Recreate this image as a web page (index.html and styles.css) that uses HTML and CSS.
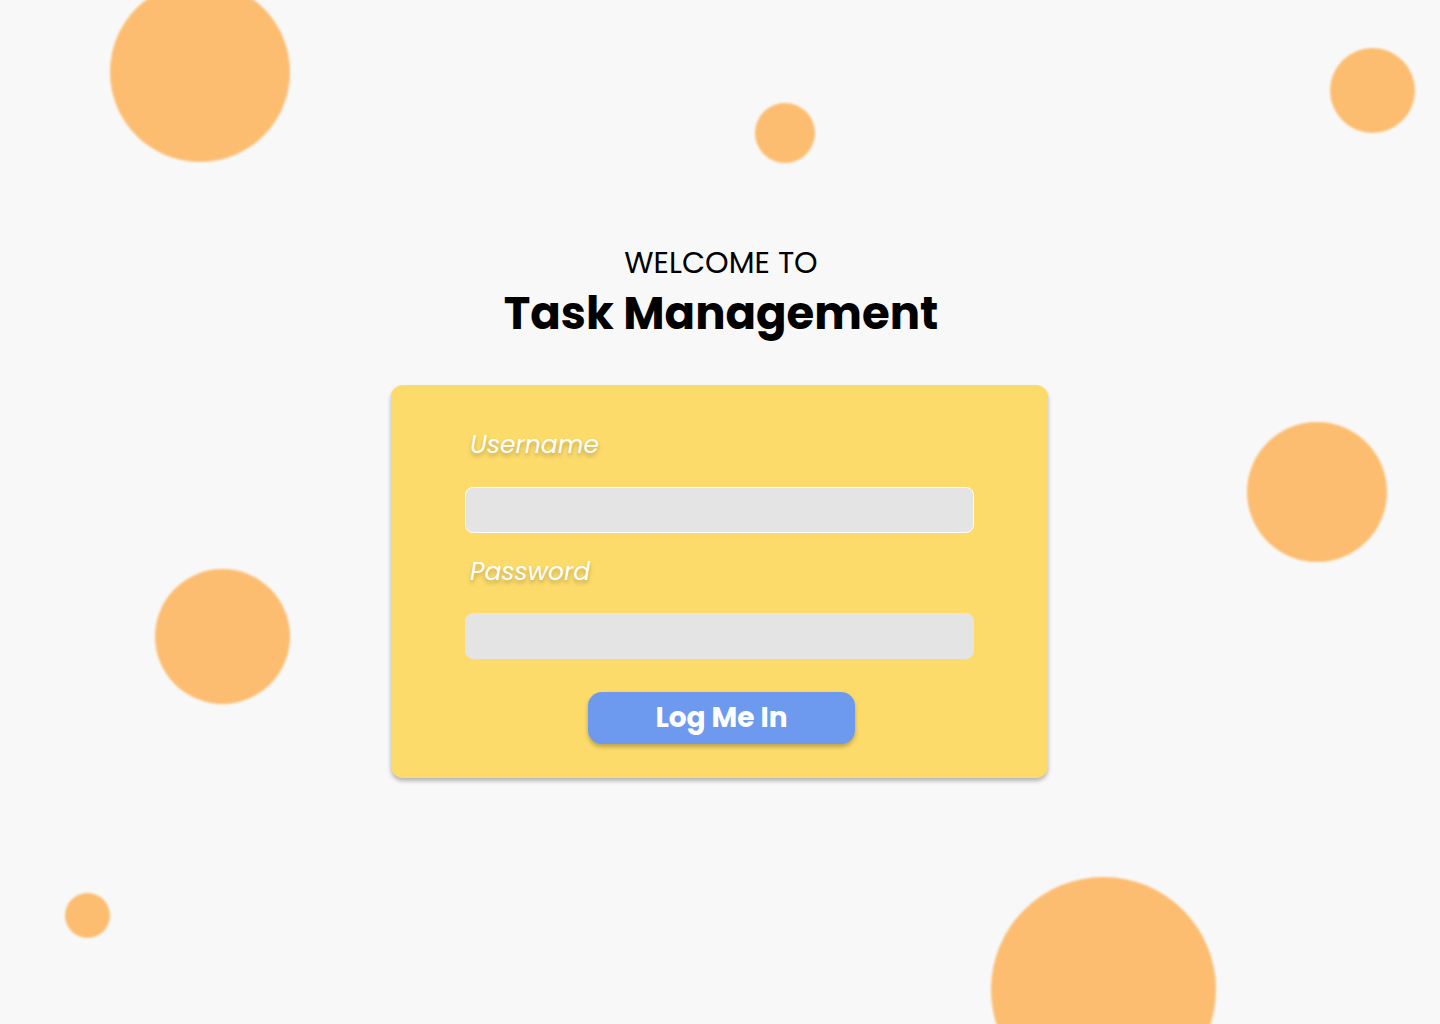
FILE: index.html
```html
<!DOCTYPE html>
<html lang="en">
<head>
<meta charset="utf-8">
<title>Task Management - Login</title>
<link rel="stylesheet" href="styles.css">
</head>
<body>
<div class="bubbles" aria-hidden="true">
  <span class="bubble b1"></span>
  <span class="bubble b2"></span>
  <span class="bubble b3"></span>
  <span class="bubble b4"></span>
  <span class="bubble b5"></span>
  <span class="bubble b6"></span>
  <span class="bubble b7"></span>
</div>
<main class="page">
  <header class="title">
    <p class="welcome">WELCOME TO</p>
    <h1 class="app-name">Task Management</h1>
  </header>
  <form class="card">
    <label class="label" for="username">Username</label>
    <input class="field field-first" id="username" type="text">
    <label class="label label-second" for="password">Password</label>
    <input class="field field-second" id="password" type="password">
    <div class="actions">
      <button type="button" class="btn">Log Me In</button>
    </div>
  </form>
</main>
</body>
</html>
```
FILE: styles.css
```css
html, body {
  margin: 0;
  padding: 0;
  overflow: hidden;
}
body {
  width: 1440px;
  height: 1024px;
  background: #f8f8f8;
  font-family: "Poppins", "Inter", "Open Sans", sans-serif;
  position: relative;
}
.bubbles {
  position: absolute;
  inset: 0;
  z-index: 0;
  overflow: hidden;
}
.bubble {
  position: absolute;
  border-radius: 50%;
  background: #fdbd70;
  filter: blur(1px);
}
.b1 { left: 110px; top: -18px; width: 180px; height: 180px; }
.b2 { left: 755px; top: 103px; width: 60px; height: 60px; }
.b3 { left: 1330px; top: 48px; width: 85px; height: 85px; }
.b4 { left: 1247px; top: 422px; width: 140px; height: 140px; }
.b5 { left: 155px; top: 569px; width: 135px; height: 135px; }
.b6 { left: 65px; top: 893px; width: 45px; height: 45px; }
.b7 { left: 991px; top: 877px; width: 225px; height: 225px; }

.page {
  position: relative;
  z-index: 1;
  display: flex;
  flex-direction: column;
  align-items: center;
  padding-top: 241px;
}
.title {
  display: flex;
  flex-direction: column;
  align-items: center;
  margin-left: 2px;
}
.welcome {
  margin: 0;
  font-size: 30px;
  line-height: 44px;
  font-weight: 400;
  color: #000;
}
.app-name {
  margin: 1px 0 0;
  font-size: 45px;
  line-height: 56px;
  font-weight: 700;
  color: #000;
}
.card {
  margin-top: 43px;
  margin-right: 1px;
  width: 657px;
  box-sizing: border-box;
  padding: 42px 74px 34px;
  background: #fddb6a;
  border-radius: 12px;
  box-shadow: 0 3px 4px rgba(0, 0, 0, 0.28);
  display: flex;
  flex-direction: column;
}
.label {
  padding-left: 5px;
  font-size: 25px;
  line-height: 36px;
  font-style: italic;
  color: #fff;
  text-shadow: 0 3px 4px rgba(0, 0, 0, 0.25);
}
.label-second {
  margin-top: 21px;
}
.field {
  display: block;
  width: 509px;
  height: 46px;
  box-sizing: border-box;
  background: #e4e4e4;
  border: 1px solid #e4e4e4;
  border-radius: 8px;
  margin-top: 24px;
  outline: none;
}
.field-first {
  border-color: #fff;
}
.field-second {
  margin-top: 23px;
}
.actions {
  display: flex;
  justify-content: center;
  margin-top: 33px;
  padding-left: 4px;
}
.btn {
  width: 267px;
  height: 52px;
  border: none;
  border-radius: 14px;
  background: #6d9aee;
  color: #fff;
  font-family: inherit;
  font-size: 28px;
  line-height: 52px;
  padding: 0;
  font-weight: 700;
  box-shadow: 0 3px 4px rgba(0, 0, 0, 0.25);
  cursor: pointer;
}
```
